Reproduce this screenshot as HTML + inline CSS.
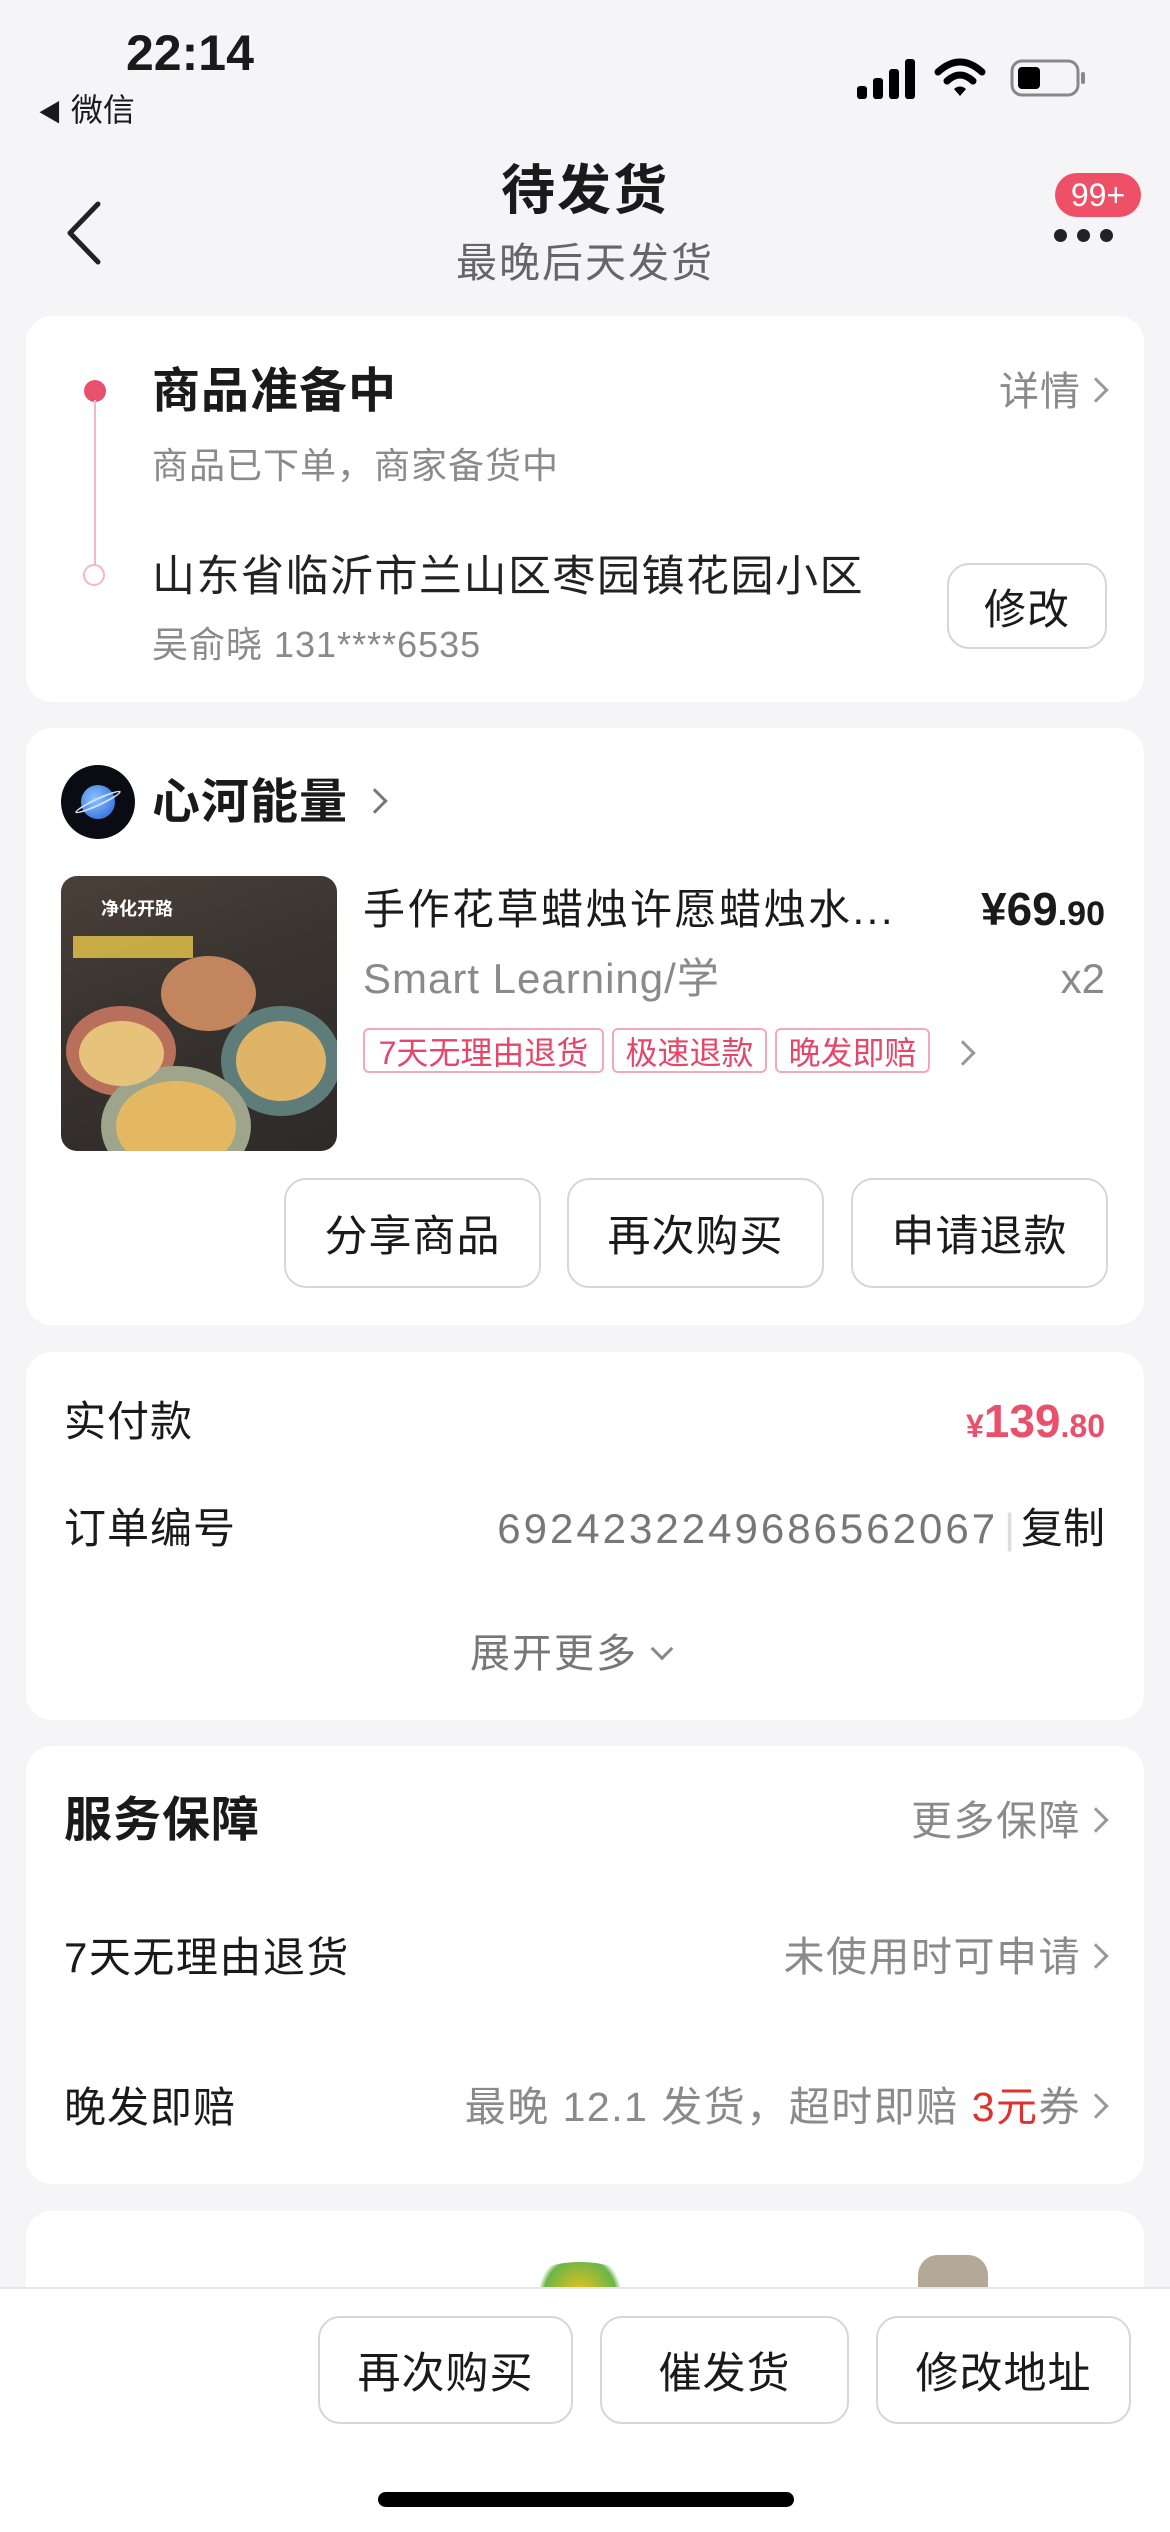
<!DOCTYPE html>
<html><head><meta charset="utf-8"><style>
*{margin:0;padding:0;box-sizing:border-box}
body{width:1170px;height:2532px;background:#f5f5f7;position:relative;overflow:hidden;font-family:"Liberation Sans","Noto Sans CJK SC",sans-serif;color:#1a1a1a}
.a{position:absolute;white-space:nowrap;line-height:1}
.card{position:absolute;left:26px;width:1118px;background:#fff;border-radius:26px}
.btn{position:absolute;border:2px solid #d6d6d6;border-radius:22px;background:#fff;display:flex;align-items:center;justify-content:center;font-size:43px;color:#1a1a1a;letter-spacing:1px}
.g{color:#8a8a8a}
.chev{display:inline-block;width:18px;height:18px;border-right:3px solid #999;border-top:3px solid #999;transform:rotate(45deg);margin-left:6px;vertical-align:middle;position:relative;top:-4px}
.tag{position:absolute;top:1028px;height:45px;border:2px solid #f2a9b8;border-radius:6px;color:#e5476a;font-size:32px;display:flex;align-items:center;justify-content:center}
</style></head><body>
<div class="a" style="left:126px;top:28px;font-size:50px;font-weight:bold">22:14</div>
<div class="a" style="left:38px;top:94px;font-size:32px"><span style="font-size:24px">◀</span> 微信</div>
<svg class="a" style="left:855px;top:56px" width="240" height="44" viewBox="0 0 240 44">
<rect x="2" y="30" width="10" height="13" rx="3"/><rect x="18" y="22" width="10" height="21" rx="3"/><rect x="34" y="13" width="10" height="30" rx="3"/><rect x="50" y="3" width="10" height="40" rx="3"/>
<path d="M83 16 Q105 -4 127 16" stroke="#000" stroke-width="7" fill="none" stroke-linecap="round"/>
<path d="M92 25 Q105 13 118 25" stroke="#000" stroke-width="7" fill="none" stroke-linecap="round"/>
<path d="M99 33 L105 40 L111 33 Q105 28 99 33Z"/>
<rect x="157" y="5" width="66" height="34" rx="10" fill="none" stroke="#888" stroke-width="3"/>
<rect x="163" y="11" width="22" height="22" rx="4"/>
<rect x="226" y="16" width="4" height="12" rx="2" fill="#888"/>
</svg>
<svg class="a" style="left:60px;top:200px" width="44" height="66"><path d="M38 4 L10 33 L38 62" stroke="#222" stroke-width="5" fill="none" stroke-linecap="round" stroke-linejoin="round"/></svg>
<div class="a" style="left:0;width:1170px;text-align:center;top:164px;font-size:54px;font-weight:bold;letter-spacing:2px">待发货</div>
<div class="a g" style="left:0;width:1170px;text-align:center;top:243px;font-size:41px;color:#666;letter-spacing:2px">最晚后天发货</div>
<div class="a" style="left:1055px;top:173px;width:86px;height:44px;border-radius:22px;background:#ee5068;color:#fff;font-size:32px;text-align:center;line-height:44px">99+</div>
<div class="a" style="left:1054px;top:229px">
<span style="position:absolute;left:0;width:13px;height:13px;border-radius:7px;background:#222"></span>
<span style="position:absolute;left:23px;width:13px;height:13px;border-radius:7px;background:#222"></span>
<span style="position:absolute;left:46px;width:13px;height:13px;border-radius:7px;background:#222"></span></div>

<div class="card" style="top:316px;height:386px"></div>
<div class="a" style="left:84px;top:380px;width:22px;height:22px;border-radius:11px;background:#e9506c"></div>
<div class="a" style="left:94px;top:400px;width:2px;height:166px;background:#f2b8c3"></div>
<div class="a" style="left:83px;top:564px;width:22px;height:22px;border-radius:11px;border:2px solid #f2b8c3;background:#fff"></div>
<div class="a" style="left:152px;top:368px;font-size:48px;font-weight:bold;letter-spacing:1px">商品准备中</div>
<div class="a g" style="right:65px;top:372px;font-size:40px;letter-spacing:1px">详情<span class="chev"></span></div>
<div class="a g" style="left:152px;top:448px;font-size:36px;letter-spacing:1px">商品已下单，商家备货中</div>
<div class="a" style="left:152px;top:556px;font-size:43px;color:#222;letter-spacing:1.5px">山东省临沂市兰山区枣园镇花园小区</div>
<div class="a g" style="left:152px;top:627px;font-size:36px;letter-spacing:1px">吴俞晓 131****6535</div>
<div class="btn" style="left:947px;top:563px;width:160px;height:86px;font-size:42px">修改</div>

<div class="card" style="top:728px;height:597px"></div>
<div class="a" style="left:61px;top:765px;width:74px;height:74px;border-radius:37px;background:#0b0b14;overflow:hidden"><div style="position:absolute;left:20px;top:20px;width:34px;height:34px;border-radius:17px;background:radial-gradient(circle at 40% 40%,#8fc4ff,#1e5fd0)"></div><div style="position:absolute;left:12px;top:33px;width:50px;height:8px;border-radius:50%;border:2px solid #cfe3ff;transform:rotate(-25deg)"></div></div>
<div class="a" style="left:152px;top:779px;font-size:48px;font-weight:bold;letter-spacing:1px">心河能量<span class="chev" style="margin-left:18px;border-color:#777"></span></div>
<div class="a" style="left:61px;top:876px;width:276px;height:275px;border-radius:16px;overflow:hidden;background:linear-gradient(160deg,#4a4038 0%,#3a3430 40%,#2d2a28 100%)">
<div style="position:absolute;left:12px;top:60px;width:120px;height:22px;background:#e9c84a;opacity:.8"></div>
<div style="position:absolute;left:40px;top:24px;color:#fff;font-size:18px;font-weight:bold">净化开路</div>
<div style="position:absolute;left:100px;top:80px;width:95px;height:75px;border-radius:50%;background:#c2855e"></div>
<div style="position:absolute;left:5px;top:130px;width:110px;height:90px;border-radius:50%;background:#b9705a"></div>
<div style="position:absolute;left:160px;top:130px;width:120px;height:110px;border-radius:50%;background:#5e7d7a"></div>
<div style="position:absolute;left:40px;top:190px;width:150px;height:120px;border-radius:50%;background:#9fa58a"></div>
<div style="position:absolute;left:55px;top:205px;width:120px;height:90px;border-radius:50%;background:#e4b862"></div>
<div style="position:absolute;left:175px;top:145px;width:90px;height:80px;border-radius:50%;background:#e0b466"></div>
<div style="position:absolute;left:18px;top:145px;width:85px;height:65px;border-radius:50%;background:#e6c27a"></div>
</div>
<div class="a" style="left:363px;top:889px;font-size:42px;letter-spacing:2.5px">手作花草蜡烛许愿蜡烛水...</div>
<div class="a" style="right:65px;top:886px;font-size:46px;font-weight:bold">¥69<span style="font-size:34px">.90</span></div>
<div class="a g" style="left:363px;top:958px;font-size:42px;letter-spacing:1px">Smart Learning/学</div>
<div class="a g" style="right:65px;top:958px;font-size:42px">x2</div>
<div class="tag" style="left:363px;width:241px">7天无理由退货</div>
<div class="tag" style="left:612px;width:155px">极速退款</div>
<div class="tag" style="left:775px;width:155px">晚发即赔</div>
<span class="a chev" style="left:948px;top:1044px"></span>
<div class="btn" style="left:284px;top:1178px;width:257px;height:110px">分享商品</div>
<div class="btn" style="left:567px;top:1178px;width:257px;height:110px">再次购买</div>
<div class="btn" style="left:851px;top:1178px;width:257px;height:110px">申请退款</div>

<div class="card" style="top:1352px;height:368px"></div>
<div class="a" style="left:64px;top:1401px;font-size:42px;letter-spacing:1px">实付款</div>
<div class="a" style="right:65px;top:1398px;font-size:46px;font-weight:bold;color:#e9506c"><span style="font-size:32px">¥</span>139<span style="font-size:32px">.80</span></div>
<div class="a" style="left:64px;top:1508px;font-size:42px;letter-spacing:1px">订单编号</div>
<div class="a" style="right:65px;top:1508px;font-size:42px"><span style="color:#777;letter-spacing:3px">6924232249686562067</span><span style="color:#ddd;margin:0 6px">|</span>复制</div>
<div class="a" style="left:470px;top:1634px;font-size:40px;color:#777;letter-spacing:2px">展开更多<span style="display:inline-block;width:16px;height:16px;border-right:3px solid #888;border-bottom:3px solid #888;transform:rotate(45deg);margin-left:16px;position:relative;top:-10px"></span></div>

<div class="card" style="top:1746px;height:438px"></div>
<div class="a" style="left:64px;top:1797px;font-size:48px;font-weight:bold;letter-spacing:1px">服务保障</div>
<div class="a g" style="right:65px;top:1801px;font-size:41px;letter-spacing:1.5px">更多保障<span class="chev"></span></div>
<div class="a" style="left:64px;top:1937px;font-size:42px;letter-spacing:1.5px">7天无理由退货</div>
<div class="a g" style="right:65px;top:1937px;font-size:41px;letter-spacing:1.5px">未使用时可申请<span class="chev"></span></div>
<div class="a" style="left:64px;top:2087px;font-size:42px;letter-spacing:1px">晚发即赔</div>
<div class="a g" style="right:65px;top:2087px;font-size:41px;letter-spacing:1.5px">最晚 12.1 发货，超时即赔 <span style="color:#e0322c">3元</span>券<span class="chev"></span></div>

<div class="card" style="top:2211px;height:200px"></div>
<div class="a" style="left:530px;top:2262px;width:100px;height:40px;border-radius:50% 50% 0 0;background:radial-gradient(circle at 50% 80%,#f0c21c,#6cb548 60%,#fff 70%)"></div>
<div class="a" style="left:918px;top:2255px;width:70px;height:50px;border-radius:20px 20px 0 0;background:#b4a898"></div>

<div class="a" style="left:0;top:2287px;width:1170px;height:245px;background:#fff;border-top:2px solid #e6e6e6"></div>
<div class="btn" style="left:318px;top:2316px;width:255px;height:108px">再次购买</div>
<div class="btn" style="left:600px;top:2316px;width:249px;height:108px">催发货</div>
<div class="btn" style="left:876px;top:2316px;width:255px;height:108px">修改地址</div>
<div class="a" style="left:378px;top:2492px;width:416px;height:15px;border-radius:8px;background:#000"></div>
</body></html>
